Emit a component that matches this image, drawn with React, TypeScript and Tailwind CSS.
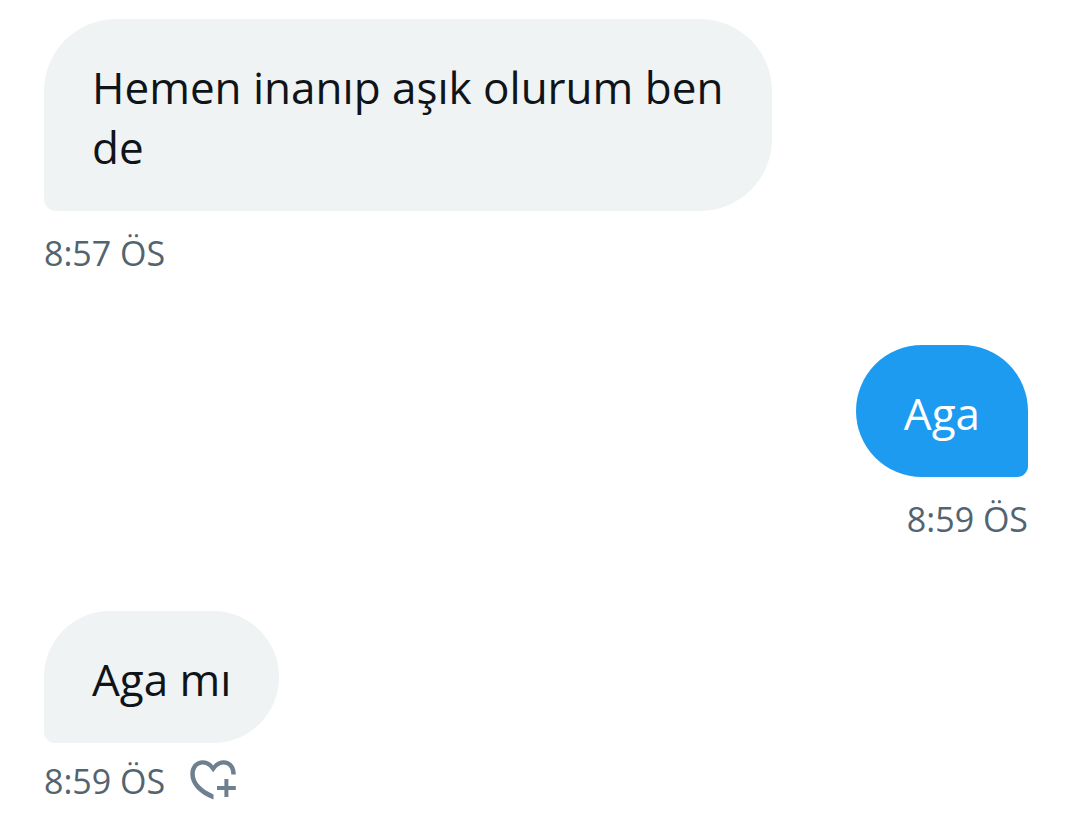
import clsx from 'clsx';

interface Message {
  id: number;
  text: string;
  time: string;
  mine?: boolean;
  canReact?: boolean;
}

const MESSAGES: Message[] = [
  { id: 1, text: 'Hemen inanıp aşık olurum ben de', time: '8:57 ÖS' },
  { id: 2, text: 'Aga', time: '8:59 ÖS', mine: true },
  { id: 3, text: 'Aga mı', time: '8:59 ÖS', canReact: true },
];

function HeartPlusIcon() {
  return (
    <svg viewBox="0 0 50 44" className="h-11 w-[50px]" fill="currentColor" aria-hidden="true">
      <path d="M46.8 15.5C46.8 7 42 1.2 34.6 1.2C30.4 1.2 26.6 3.2 24.2 6.4C21.8 3.2 18 1.2 13.8 1.2C6.5 1.2 1.3 7 1.3 15.3C1.3 25.5 10 35 24.5 40.6V35.4C12.7 30.3 5.8 23 5.8 15.3C5.8 9.3 9.2 5.6 13.8 5.6C18 5.6 20.8 8.4 24.2 13.2C27.6 8.4 30.4 5.6 34.6 5.6C39.2 5.6 42.3 9.3 42.3 15.5Z" />
      <path d="M35.4 20H39.4V27H46.8V31H39.4V38H35.4V31H28V27H35.4Z" />
    </svg>
  );
}

function MessageRow({ text, time, mine, canReact }: Message) {
  return (
    <li className={clsx('flex flex-col', mine ? 'items-end' : 'items-start')}>
      <p
        className={clsx(
          'max-w-[74%] px-12 pt-[38px] pb-[34px] text-[44px] leading-[60px]',
          mine
            ? 'rounded-[72px] rounded-br-xl bg-[#1d9bf0] text-white'
            : 'rounded-[72px] rounded-bl-xl bg-[#eff3f4] text-[#0f1419]'
        )}
      >
        {text}
      </p>
      <div className={clsx('flex items-center gap-6', canReact ? 'mt-4' : 'mt-5')}>
        <time className="text-[34px] leading-[44px] text-[#536471]">{time}</time>
        {canReact && (
          <button type="button" aria-label="Tepki ekle" className="text-[#6e8090]">
            <HeartPlusIcon />
          </button>
        )}
      </div>
    </li>
  );
}

export default function App() {
  return (
    <main className="min-h-screen bg-white px-11 pt-[19px] font-['Open_Sans',sans-serif]">
      <ul className="flex flex-col gap-[70px]">
        {MESSAGES.map((m) => (
          <MessageRow key={m.id} {...m} />
        ))}
      </ul>
    </main>
  );
}
